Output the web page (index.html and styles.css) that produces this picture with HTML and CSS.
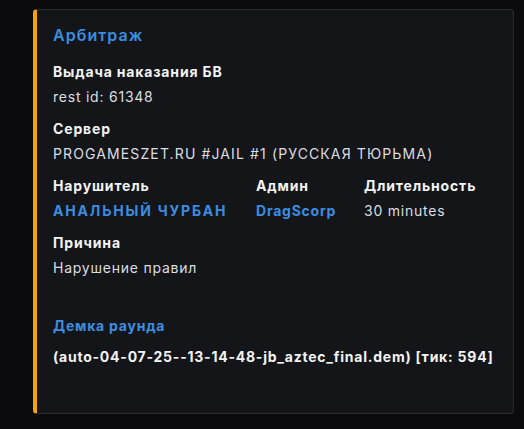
FILE: index.html
```html
<!DOCTYPE HTML><html>
<head>
  <title>Арбитраж</title>
  <meta name="viewport" content="width=device-width, initial-scale=1">
  <link rel="stylesheet" href="styles.css">
</head>
<body>
  <div class="embed">
    <div class="embed-title">Арбитраж</div>
    <div class="fields">
      <div class="field full">
        <div class="field-name">Выдача наказания БВ</div>
        <div class="field-value">rest id: 61348</div>
      </div>
      <div class="field full">
        <div class="field-name">Сервер</div>
        <div class="field-value caps">PROGAMESZET.RU #JAIL #1 (РУССКАЯ ТЮРЬМА)</div>
      </div>
      <div class="field">
        <div class="field-name">Нарушитель</div>
        <div class="field-value link caps">АНАЛЬНЫЙ ЧУРБАН</div>
      </div>
      <div class="field">
        <div class="field-name">Админ</div>
        <div class="field-value link">DragScorp</div>
      </div>
      <div class="field">
        <div class="field-name">Длительность</div>
        <div class="field-value">30 minutes</div>
      </div>
      <div class="field full">
        <div class="field-name">Причина</div>
        <div class="field-value">Нарушение правил</div>
      </div>
    </div>
    <div class="demo">
      <div class="demo-link">Демка раунда</div>
      <div class="demo-file">(auto-04-07-25--13-14-48-jb_aztec_final.dem) [тик: 594]</div>
    </div>
  </div>
</body>
</html>
```

FILE: styles.css
```css
html {font-family: Inter, "Noto Sans", sans-serif; font-size: 14px; letter-spacing: 0.055em;}
body {margin: 0; padding: 9px 10px 15px 33px; background-color: #0b0b0d;}
.embed {box-sizing: border-box; width: 481px; background-color: #141518; border: 1px solid #2a2b30; border-left: 4px solid #f5a30c; border-radius: 4px; padding: 14px 16px 45px 16px;}
.embed-title {font-size: 16px; font-weight: 600; line-height: 22px; color: #3c8de0; margin-bottom: 15px; letter-spacing: 0.065em;}
.fields {display: grid; grid-template-columns: 203px 108px auto; row-gap: 10px;}
.field.full {grid-column: 1 / -1;}
.field-name {font-weight: 700; line-height: 22px; color: #f2f3f5; margin-bottom: 3px; letter-spacing: 0.06em;}
.field-value {line-height: 22px; color: #dbdee1;}
.field-value.caps {letter-spacing: 0.08em;}
.field-value.link {font-weight: 700; color: #3c8de0;}
.field-value.link.caps {letter-spacing: 0.13em;}
.demo {margin-top: 36px;}
.demo-link {font-weight: 700; line-height: 22px; color: #3c8de0; margin-bottom: 9px;}
.demo-file {font-weight: 700; line-height: 22px; color: #f2f3f5;}
```
